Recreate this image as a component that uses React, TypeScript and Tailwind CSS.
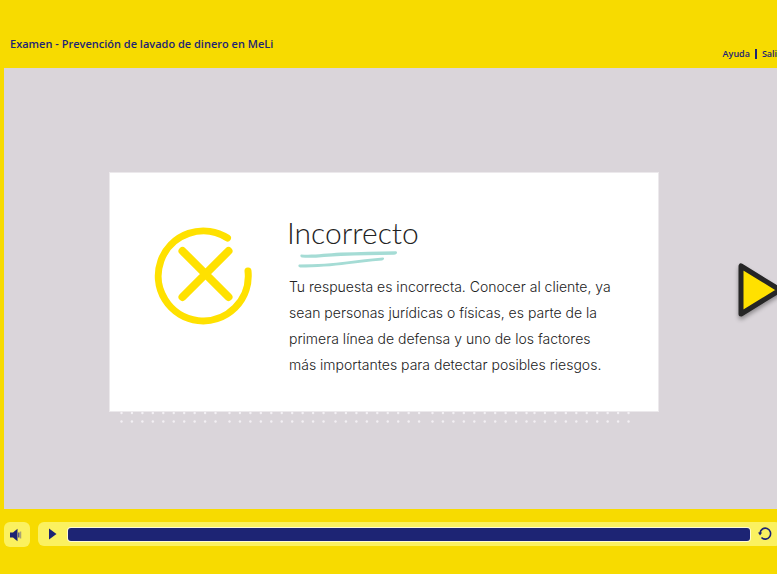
import React from "react";

const dotGroups = [
  { start: 11, count: 10 },
  { start: 119, count: 10 },
  { start: 225, count: 9 },
  { start: 322, count: 10 },
  { start: 424, count: 10 },
];

function Dots() {
  return (
    <svg className="absolute top-full left-0 h-4 w-full" aria-hidden="true" fill="#f3f0f4">
      {dotGroups.map((g) =>
        Array.from({ length: g.count }, (_, i) => (
          <g key={`${g.start}-${i}`}>
            <circle cx={g.start + 0.5 + i * 10.45} cy="2" r="1.2" />
            <circle cx={g.start + 0.5 + i * 10.45} cy="10.5" r="1.2" />
          </g>
        )),
      )}
    </svg>
  );
}

function WrongIcon() {
  return (
    <svg
      width="98"
      height="98"
      viewBox="0 0 98 98"
      fill="none"
      stroke="#ffe100"
      strokeLinecap="round"
      className="shrink-0"
      aria-hidden="true"
    >
      <path d="M73.5 11A45 45 0 1 0 94 44" strokeWidth="7" />
      <path d="M28.5 24L74.5 70M74.5 24L28.5 70" strokeWidth="8" />
    </svg>
  );
}

function Underline() {
  return (
    <svg width="102" height="18" viewBox="0 0 102 18" fill="#a5dcd5" className="mt-[3px] ml-2.5 block" aria-hidden="true">
      <path d="M4 3.500C16 4.500 28 2.500 44 1.600C62 .9 80 .9 99 .3C101 1 100 3.600 97 3.800C78 4.200 62 4.200 44 4.900C30 5.400 16 7.500 5 6.500C3 5.600 3 4.200 4 3.500Z" />
      <path d="M2 13.500C20 13.500 36 12.300 50 10.500C62 8.800 74 7.500 86 6.500C88 7 87 9 85 9.400C72 10.200 62 11.700 50 13.200C36 15.200 18 16.400 3 16.400C1 15.800 1 14.600 2 13.500Z" />
    </svg>
  );
}

function NextButton() {
  return (
    <button type="button" aria-label="Siguiente" className="w-12 shrink-0 cursor-pointer">
      <svg width="48" height="62" viewBox="0 0 48 62" className="block overflow-visible">
        <path
          d="M4 5V53L43 29Z"
          fill="#ffe100"
          stroke="#262626"
          strokeWidth="5"
          strokeLinejoin="round"
          className="drop-shadow-[0_3px_2px_rgba(0,0,0,0.35)]"
        />
      </svg>
    </button>
  );
}

export default function App() {
  return (
    <div className="min-h-screen overflow-hidden bg-[#f7db00] pl-1 font-['Open_Sans','Liberation_Sans',sans-serif] text-[#1d2474]">
      <header className="flex h-17 justify-between pl-1.5">
        <h1 className="mt-9 text-[11px] leading-4 font-semibold whitespace-nowrap">
          Examen - Prevención de lavado de dinero en MeLi
        </h1>
        <nav className="-mr-1 mt-[46px] flex h-4 shrink-0 items-center gap-[5px] text-[9px] leading-4 font-semibold">
          <a href="#ayuda">Ayuda</a>
          <span className="h-2.5 w-0.5 bg-[#1d2474]" />
          <a href="#salir">Salir</a>
        </nav>
      </header>

      <main className="flex items-center bg-[#dad5da] pt-[104px] pb-[97px] pl-[105px]">
        <section className="relative flex min-w-0 flex-1 gap-[35px] border border-[#ece9ec] bg-white pt-[54px] pr-6 pb-[33px] pl-[44px]">
          <WrongIcon />
          <div className="-mt-[11px] min-w-0 text-[#222]">
            <h2 className="font-['Lato','Liberation_Sans',sans-serif] text-[30px] leading-8 font-light">Incorrecto</h2>
            <Underline />
            <p className="mt-[5px] ml-0.5 font-['Inter','Liberation_Sans',sans-serif] text-[14px] leading-[26px] font-light">
              Tu respuesta es incorrecta. Conocer al cliente, ya
              <br />
              sean personas jurídicas o físicas, es parte de la
              <br />
              primera línea de defensa y uno de los factores
              <br />
              más importantes para detectar posibles riesgos.
            </p>
          </div>
          <Dots />
        </section>
        <div className="flex w-[118px] shrink-0 pl-[78px]">
          <NextButton />
        </div>
      </main>

      <footer className="mt-3 flex gap-2 pt-px">
        <button
          type="button"
          aria-label="Volumen"
          className="flex h-[25px] w-[26px] shrink-0 items-center justify-center rounded-md bg-[#fbf160]"
        >
          <svg width="14" height="14" viewBox="0 0 14 14" aria-hidden="true">
            <path d="M0 4.500H3L7.500 .8V13.200L3 9.500H0Z" fill="#1d2474" />
            <path d="M8.800 4.500V9.500" stroke="#55548a" strokeWidth="1.500" />
            <path d="M10.500 3.500V10.500" stroke="#a9a276" strokeWidth="1.500" />
          </svg>
        </button>
        <div className="-mr-1 flex h-6 flex-1 items-center rounded-md bg-[#fbf160] pl-2.5">
          <button type="button" aria-label="Reproducir" className="w-5 shrink-0">
            <svg width="9" height="12" viewBox="0 0 9 12" aria-hidden="true">
              <path d="M1 .5L8.500 6L1 11.500Z" fill="#1d2474" />
            </svg>
          </button>
          <input
            type="range"
            aria-label="Progreso"
            defaultValue={100}
            className="h-[13px] min-w-0 flex-1 appearance-none rounded-[3px] bg-[#1d2474] ring-1 ring-[#fffbd0] [&::-webkit-slider-thumb]:h-0 [&::-webkit-slider-thumb]:w-0 [&::-webkit-slider-thumb]:appearance-none"
          />
          <button type="button" aria-label="Repetir" className="flex w-[31px] shrink-0 pl-2">
            <svg width="14" height="14" viewBox="0 0 14 14" fill="none" aria-hidden="true">
              <path d="M2 6A5.300 5.500 0 1 1 3.500 10.500" stroke="#1d2474" strokeWidth="1.600" />
              <path d="M0 5.500H4.200L2 8.500Z" fill="#1d2474" />
            </svg>
          </button>
        </div>
      </footer>
    </div>
  );
}
